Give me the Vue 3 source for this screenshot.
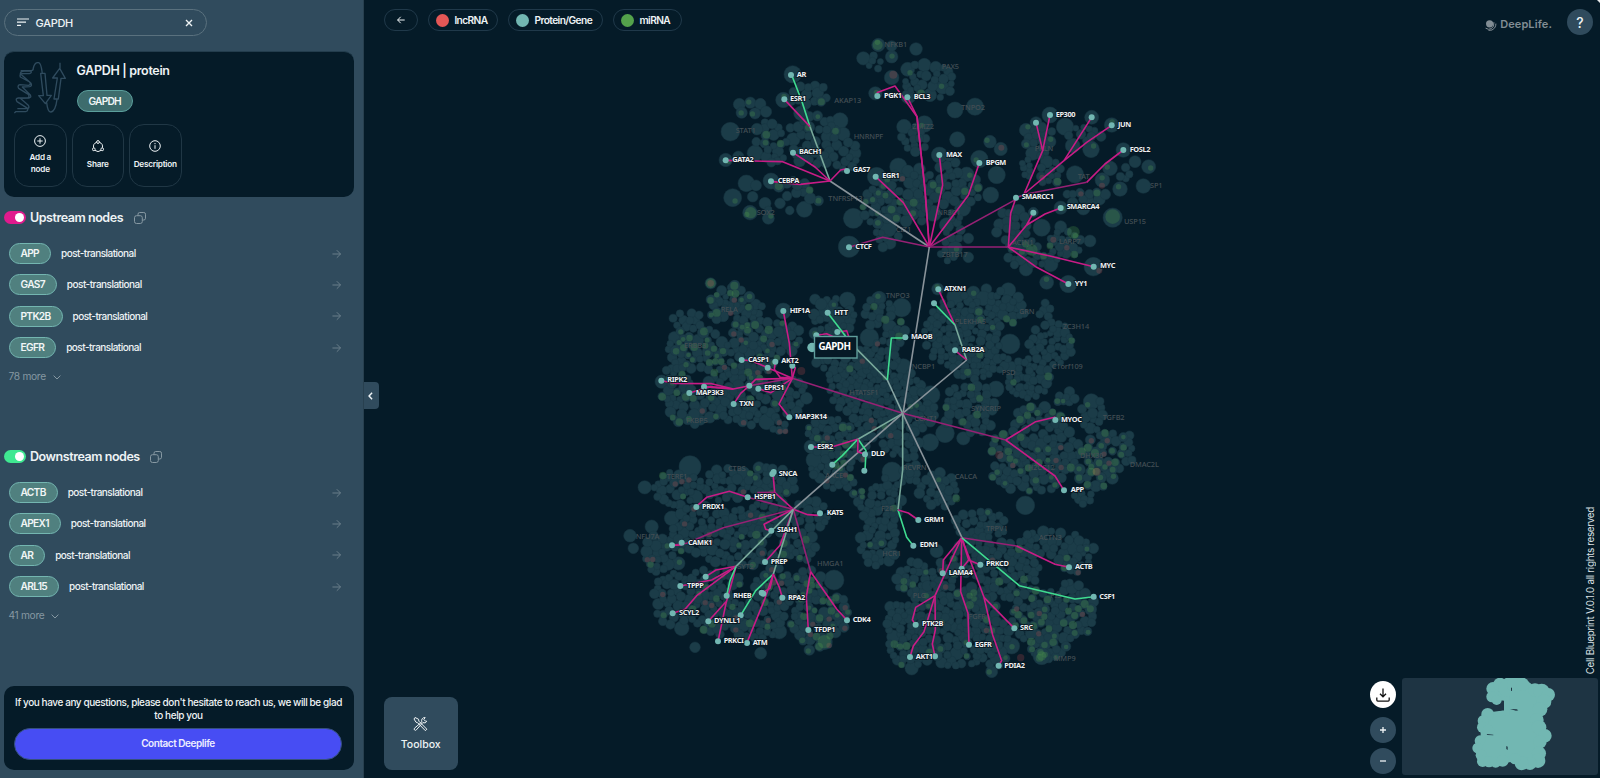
<script setup>
const upstream = ['APP', 'GAS7', 'PTK2B', 'EGFR']
const downstream = ['ACTB', 'APEX1', 'AR', 'ARL15']
const sections = [
  { title: 'Upstream nodes', tone: 'pink', rows: upstream, more: '78 more' },
  { title: 'Downstream nodes', tone: 'green', rows: downstream, more: '41 more' },
]
const legend = [
  { name: 'lncRNA', tone: 'red', width: 70 },
  { name: 'Protein/Gene', tone: 'teal', width: 95 },
  { name: 'miRNA', tone: 'leaf', width: 69 },
]

// Every graph tile has its own origin and is drawn at a third of its unit size.
const tiles = {
  a: [700, 30], b: [940, 30], c: [640, 270], d: [870, 270], e: [610, 430], f: [850, 440],
}
const px = (t, x) => tiles[t][0] + x / 3
const py = (t, y) => tiles[t][1] + y / 3

let seed = 4217
const rnd = () => {
  seed = (seed * 1664525 + 1013904223) % 4294967296
  return seed / 4294967296
}

// Standalone large nodes: x, y, r
const big = {
  a: [[91,305,28],[139,460,25],[98,503,27],[313,538,24],[150,548,22],[278,133,26],[250,210,23],[213,453,24],[490,85,20],[575,80,19],[648,57,19],[623,118,21],[673,105,20],[707,112,18],[727,172,20],[690,195,20],[420,272,24],[612,290,22],[673,282,25],[765,240,24],[460,565,30],[447,650,32],[565,597,24],[530,440,28],[595,410,26],[700,550,24],[526,190,20],[625,200,22],[718,375,24],[118,223,18],[151,218,17],[181,222,17],[165,250,17],[198,245,17],[125,248,17],[535,45,20],[575,48,16],[575,143,22],[303,250,22],[280,328,20],[165,370,24],[115,380,17],[158,500,16],[195,520,18],[205,565,18],[345,168,15],[770,330,20],[77,390,20],[430,312,20],[465,370,18],[240,520,16],[570,640,18]],
  b: [[52,328,23],[7,173,19],[25,125,14],[105,230,26],[118,387,26],[80,433,22],[170,435,26],[150,335,19],[182,357,20],[152,495,24],[68,535,24],[258,300,20],[330,255,24],[375,290,26],[288,278,18],[455,262,21],[515,285,22],[453,358,25],[398,347,22],[278,370,21],[320,395,19],[405,433,26],[487,450,22],[510,415,22],[550,360,22],[585,395,18],[626,410,21],[540,477,22],[610,468,22],[430,535,20],[478,508,18],[235,543,20],[305,593,26],[362,590,18],[450,633,18],[178,583,17],[460,710,28],[385,762,26],[320,757,21],[258,718,20],[362,533,20],[332,703,22],[20,585,22],[45,655,22],[85,625,16],[85,682,16],[330,335,18],[205,683,14],[280,547,15]],
  c: [[430,123,24],[622,90,24],[785,113,28],[718,84,20],[380,455,24],[688,203,28],[748,170,20],[65,335,20],[563,128,28],[525,190,18],[590,185,20],[155,130,14],[525,88,16],[600,150,20]],
  d: [[420,222,30],[378,357,24],[182,375,28],[225,490,28],[180,517,26],[280,505,20],[66,606,30],[466,706,28],[100,290,24],[310,68,20],[415,60,22],[349,57,16],[203,57,18],[727,625,18],[664,395,24],[524,412,18],[255,80,25],[25,85,20],[60,170,20],[340,85,22],[230,455,18]],
  e: [[240,110,33],[672,450,30],[104,172,20],[125,290,20],[60,317,19],[70,355,16],[452,670,18],[612,90,24],[258,200,20],[447,113,18],[400,130,20],[185,265,22],[598,660,16],[255,652,16],[205,400,20],[215,595,22],[602,50,20],[508,605,22],[320,120,16],[500,555,18],[400,585,20]],
  f: [[260,333,20],[485,618,24],[425,695,18],[185,685,20],[120,500,16],[130,590,20],[668,325,20],[580,275,18],[730,325,16],[730,485,16],[705,545,16],[225,465,24],[320,640,20],[415,620,20],[60,240,18],[60,190,16]],
}

// Packed communities: x, y, rx, ry, count, rMin, rMax, green share, red share
const groups = {
  a: [[200,330,46,60,26,10,18,.12,0],[325,195,60,36,20,11,18,.05,0],[345,330,88,75,56,11,19,.14,.01],[430,370,48,48,16,10,17,.05,0],[250,500,110,52,14,11,18,.25,0],[690,150,78,58,20,9,16,.1,.03],[515,100,32,26,5,9,14,.3,0],[645,325,45,40,12,10,16,.1,0],[640,490,108,85,56,11,19,.2,.02],[540,530,52,58,14,10,16,.3,0],[560,625,38,30,6,10,16,.1,0],[750,450,38,72,18,10,17,.1,.02],[205,375,50,25,8,10,15,.1,0]],
  b: [[20,460,28,72,18,10,17,.1,.02],[98,485,33,40,12,10,17,.1,0],[300,330,46,48,14,9,15,.08,0],[330,430,38,38,12,9,16,.1,.05],[435,315,52,28,9,9,15,.12,0],[262,410,18,33,7,9,14,0,0],[435,505,68,28,14,10,17,.15,.02],[555,435,16,23,5,9,13,0,0],[215,590,48,53,16,9,16,.15,.03],[375,640,48,43,18,9,16,.15,.03],[250,670,52,52,22,10,17,.35,.02],[325,695,28,23,6,9,15,.3,0],[25,665,26,33,5,9,14,.1,0],[40,590,33,48,8,9,15,.1,0]],
  c: [[275,85,43,46,17,9,16,.5,.05],[310,115,58,36,17,10,17,.45,.06],[240,110,33,43,12,9,16,.5,.03],[140,150,44,30,15,10,16,.12,0],[165,230,88,66,55,10,18,.55,.06],[340,180,63,42,32,10,17,.5,.04],[420,205,68,48,34,10,17,.2,.04],[300,270,112,58,68,10,17,.18,.1],[105,345,46,62,30,10,17,.2,.03],[160,410,86,56,46,10,18,.2,.08],[290,360,108,58,60,10,18,.1,.08],[440,375,66,56,42,10,18,.08,.05],[330,440,86,28,15,10,17,.05,.02],[420,470,22,20,6,9,15,.1,.2],[580,140,66,58,32,10,18,.08,.03],[700,130,28,43,12,10,16,.1,0],[640,340,76,92,110,9,16,.02,.02],[690,290,63,56,60,9,16,.05,.03],[730,370,48,68,44,9,16,.05,.03],[550,270,28,28,9,9,15,0,0],[570,490,68,52,38,10,17,.25,.06],[680,470,63,48,38,10,17,.12,.04],[720,400,72,52,26,10,16,.05,.02]],
  d: [[235,190,72,97,110,9,16,.03,0],[315,190,77,127,140,9,16,.03,0],[310,270,77,58,50,9,16,.02,0],[410,110,62,52,40,10,17,.1,0],[525,120,20,23,7,10,14,0,0],[545,220,70,64,74,9,16,.03,0],[475,325,64,60,74,9,16,.04,0],[400,280,23,23,7,9,15,0,0],[300,400,75,60,58,10,17,.08,0],[320,460,48,33,17,10,16,.05,0],[110,350,48,43,25,10,16,.03,.02],[130,430,70,48,34,10,17,.03,.02],[80,490,58,68,26,10,17,.05,.08],[35,260,48,53,32,10,16,.05,.1],[35,130,38,43,13,10,16,.15,0],[80,190,36,38,10,10,16,.3,0],[500,470,82,58,50,11,18,.25,0],[450,530,92,52,60,11,18,.4,.02],[560,540,68,68,52,11,18,.35,.03],[480,610,116,56,75,11,18,.4,.05],[590,385,30,24,10,10,16,.3,0],[665,430,33,58,23,10,17,.1,0],[700,550,68,68,54,11,18,.65,.03],[680,610,58,43,26,11,18,.5,.06],[770,540,22,48,10,10,16,.3,0],[640,685,30,20,10,10,15,.15,0],[205,660,60,52,44,10,17,.04,.03],[122,610,24,33,10,10,15,.03,0],[110,530,38,38,14,10,16,.05,.02]],
  e: [[210,175,78,52,34,10,17,.06,.06],[350,165,68,50,30,10,17,.04,.01],[480,160,76,53,38,10,17,.05,0],[150,370,50,58,28,10,18,.08,.02],[260,300,82,75,60,10,18,.08,.04],[390,300,86,66,64,10,17,.12,.06],[600,255,56,43,30,10,17,.05,0],[480,260,58,58,34,10,16,.04,0],[570,350,53,48,30,10,17,.2,.04],[400,385,106,28,24,10,17,.1,.02],[190,510,66,82,54,10,18,.15,.03],[310,540,68,78,52,10,17,.16,.03],[310,455,86,38,26,10,17,.1,.03],[440,570,84,58,50,10,17,.1,.04],[490,480,56,68,40,10,17,.12,.08],[590,470,53,53,30,10,17,.2,.08],[590,580,50,58,38,10,17,.5,.04],[670,550,46,58,34,10,17,.5,.04],[630,630,36,28,17,10,16,.7,.05],[680,140,56,40,22,10,17,.12,.05],[745,200,20,26,10,10,16,.7,0],[700,60,82,43,34,10,17,.2,.07],[620,110,18,46,4,9,14,0,0]],
  f: [[95,200,62,68,50,10,17,.05,0],[85,310,56,70,48,10,17,.05,0],[130,110,38,33,10,10,16,.05,0],[390,255,82,40,36,10,17,.15,0],[590,310,86,40,38,10,17,.04,.02],[675,340,53,58,27,10,17,.06,.05],[370,350,68,58,42,10,17,.1,.02],[480,390,92,86,92,10,17,.08,.02],[190,420,50,56,32,10,17,.12,.02],[280,410,38,43,15,10,16,.1,.03],[165,540,58,60,46,10,17,.12,.02],[260,530,73,73,60,10,17,.08,.02],[180,630,70,48,38,10,17,.14,.02],[370,520,78,78,58,10,17,.2,.02],[330,620,88,62,48,10,17,.14,.04],[430,610,58,73,38,10,17,.15,.05],[580,530,96,86,90,10,18,.45,.04],[670,520,60,78,46,10,18,.25,.02],[590,620,58,43,28,10,17,.6,.02],[660,460,38,38,15,10,16,.1,0]],
}

const cells = []
const marks = []
for (const [t, list] of Object.entries(big)) {
  for (const [x, y, r] of list) {
    const c = { x: px(t, x), y: py(t, y), r: r / 3 }
    cells.push(c)
    if (rnd() < 0.28) marks.push({ x: c.x + (rnd() - 0.5) * c.r, y: c.y + (rnd() - 0.5) * c.r, r: 2.7, k: 'leafy' })
  }
}
for (const [t, list] of Object.entries(groups)) {
  for (const [gx, gy, rx, ry, count, r0, r1, green, red] of list) {
    let made = 0
    for (let tries = 0; made < count && tries < count * 14; tries++) {
      const a = rnd() * Math.PI * 2
      const d = Math.sqrt(rnd())
      const x = px(t, gx + Math.cos(a) * d * rx)
      const y = py(t, gy + Math.sin(a) * d * ry)
      const r = (r0 + rnd() * (r1 - r0)) / 3
      if (cells.some(p => Math.hypot(p.x - x, p.y - y) < (p.r + r) * 0.68)) continue
      cells.push({ x, y, r })
      made++
      const roll = rnd()
      if (roll < green) marks.push({ x: x + rnd() * 2 - 1, y: y + rnd() * 2 - 1, r: 2.3 + rnd() * 1.8, k: 'leafy' })
      else if (roll < green + red) marks.push({ x: x + 1, y: y + 1, r: 2.7, k: 'ruddy' })
    }
  }
}
const extraCells = [['b', 518, 563, 29], ['e', 643, 635, 24], ['c', 212, 40, 17], ['c', 283, 47, 16], ['f', 575, 648, 26]]
for (const [t, x, y, r] of extraCells) cells.push({ x: px(t, x), y: py(t, y), r: r / 3 })
const extraMarks = [
  ['b', 518, 560, 22, 'leafy'], ['b', 400, 607, 19, 'leafy'], ['a', 152, 548, 17, 'leafy'],
  ['a', 533, 45, 15, 'leafy'], ['e', 643, 635, 20, 'leafy'], ['c', 212, 40, 15, 'leafy'], ['c', 212, 40, 10, 'ruddy'],
  ['c', 283, 47, 12, 'leafy'], ['a', 580, 134, 12, 'ruddy'], ['b', 184, 353, 9, 'ruddy'], ['b', 486, 467, 9, 'ruddy'],
  ['b', 340, 629, 9, 'ruddy'], ['f', 512, 653, 11, 'ruddy'], ['d', 388, 555, 12, 'ruddy'], ['d', 680, 605, 12, 'ruddy'],
  ['c', 484, 303, 12, 'ruddy'], ['b', 478, 722, 9, 'ruddy'], ['b', 275, 660, 18, 'leafy'], ['f', 575, 648, 14, 'leafy'],
]
for (const [t, x, y, r, k] of extraMarks) marks.push({ x: px(t, x), y: py(t, y), r: r / 3, k })

// Links: tile, tone, points
const links = [
  ['a', 'grey', '390,453 688,651'], ['a', 'mint', '330,290 390,453'], ['a', 'green', '275,135 305,212 330,290'],
  ['a', 'pink', '253,208 330,290'], ['a', 'pink', '279,368 345,411 390,453'], ['a', 'pink', '77,391 248,395 390,453'],
  ['a', 'pink', '213,454 300,463 390,453'], ['a', 'pink', '440,416 422,420 390,453'],
  ['a', 'pink', '530,188 585,168 651,260 675,480 688,651'], ['a', 'pink', '622,201 651,260 675,480 688,651'],
  ['a', 'pink', '527,440 610,518 688,651'], ['a', 'pink', '718,375 728,465 688,651'],
  ['a', 'rose', '447,652 548,622 688,651'],
  ['b', 'pink', '118,399 85,496 -32,651'], ['b', 'rose', '228,508 -32,651'], ['b', 'rose', '205,651 -32,651'],
  ['b', 'pink', '288,278 308,362 252,492'], ['b', 'pink', '330,255 308,362'], ['b', 'pink', '455,262 372,392 252,492'],
  ['b', 'pink', '515,286 440,337 372,392'], ['b', 'pink', '550,360 495,402 440,457'], ['b', 'rose', '440,457 260,492 228,503'],
  ['b', 'pink', '228,503 212,550 205,651'], ['b', 'pink', '280,548 260,585 205,651'], ['b', 'pink', '362,534 315,552 260,585'],
  ['b', 'pink', '461,710 330,678 205,651'], ['b', 'pink', '385,762 290,712 205,651'],
  ['b', 'grey', '-32,651 -111,1151'],
  ['c', 'pink', '430,123 448,220 457,325'], ['c', 'rose', '457,325 788,430'], ['c', 'pink', '305,270 335,272 383,293 457,325'],
  ['c', 'pink', '406,275 403,298 420,322 457,325'], ['c', 'pink', '457,287 466,293 457,325'],
  ['c', 'pink', '64,332 105,340 215,341 280,357'], ['c', 'pink', '148,369 210,350 280,357 328,347'],
  ['c', 'pink', '192,350 280,357'], ['c', 'rose', '328,347 457,325'], ['c', 'pink', '328,347 347,328 457,325'],
  ['c', 'pink', '281,402 302,370 328,347'], ['c', 'pink', '355,356 393,368 457,325'], ['c', 'pink', '448,442 417,402 457,325'],
  ['c', 'pink', '529,196 560,191 590,205'], ['c', 'pink', '592,186 620,182 628,205'], ['c', 'green', '563,128 618,200'],
  ['c', 'mint', '648,235 742,330'], ['c', 'pale', '742,330 788,430'], ['c', 'green', '795,204 754,204 742,330'],
  ['c', 'mint', '788,430 655,507'], ['c', 'grey', '788,430 460,718'],
  ['d', 'pink', '205,58 250,155 255,165'], ['d', 'green', '192,100 255,165'], ['d', 'mint', '255,165 290,270'],
  ['d', 'pink', '255,241 290,270'], ['d', 'grey', '290,270 98,430'], ['d', 'rose', '98,430 407,510'],
  ['d', 'pink', '556,441 497,455 407,510'], ['d', 'pink', '582,661 555,618 407,510'], ['d', 'mint', '98,430 98,600 84,718'],
  ['d', 'grey', '98,430 276,803'],
  ['e', 'pink', '603,51 665,51 744,27'], ['e', 'green', '667,104 697,77 744,27'], ['e', 'green', '744,27 768,62 765,122'],
  ['e', 'pink', '744,27 743,65 765,73'],
  ['e', 'pink', '489,130 494,187 550,238'], ['e', 'rose', '494,187 442,188'], ['e', 'rose', '413,202 550,238'],
  ['e', 'pink', '258,230 290,202 358,184 413,202'], ['e', 'pink', '630,250 625,256 593,254 550,238'],
  ['e', 'rose', '185,346 230,340 340,293 550,238'], ['e', 'pink', '185,346 215,345'], ['e', 'pink', '484,302 467,298 462,283 550,238'],
  ['e', 'pink', '465,396 510,346 550,238'], ['e', 'rose', '550,238 602,425'], ['e', 'pink', '602,425 589,500 595,600'],
  ['e', 'pink', '602,425 680,537 711,571'], ['e', 'mint', '550,238 490,432'], ['e', 'mint', '550,238 378,409'],
  ['e', 'pink', '287,440 318,420 378,409'], ['e', 'pink', '211,468 305,450 378,409'], ['e', 'pink', '188,550 225,538 260,497 378,409'],
  ['e', 'pink', '324,634 348,520 370,440 378,409'], ['e', 'green', '350,497 360,452 378,409'], ['e', 'pink', '295,574 348,515'],
  ['e', 'green', '392,556 437,482 490,432'], ['e', 'pink', '411,638 465,505 490,432'], ['e', 'pink', '455,489 480,475 490,432'],
  ['e', 'pink', '517,503 508,472 490,432'],
  ['f', 'green', '144,210 170,292 190,317'], ['f', 'pink', '144,210 175,219 205,240'],
  ['f', 'pink', '335,293 280,360 278,400'], ['f', 'pink', '335,293 297,375 255,467'], ['f', 'pink', '255,467 197,502 187,540 197,554'],
  ['f', 'pink', '255,467 222,575 190,618 180,651'], ['f', 'pink', '255,467 256,570 247,612 255,649'],
  ['f', 'pink', '335,293 332,455 354,520 357,614'], ['f', 'pink', '335,293 356,360 390,374'], ['f', 'pink', '356,360 335,386'],
  ['f', 'pink', '335,293 402,472 428,585 455,662 446,677'], ['f', 'pink', '402,472 493,565'],
  ['f', 'rose', '335,293 500,318'], ['f', 'pink', '500,318 615,373 657,382'], ['f', 'green', '335,293 508,437 675,477 731,470'],
].map(([t, tone, pts]) => ({
  tone,
  d: pts.split(' ').map(p => p.split(',').map(Number)).map(([x, y]) => `${px(t, x).toFixed(2)},${py(t, y).toFixed(2)}`).join(' '),
}))

// Highlighted nodes: tile, x, y, label, label x, label y
const nodes = [
  ['a',273,135,'AR',290,133],['a',253,208,'ESR1',270,206],['a',279,368,'BACH1',297,366],['a',77,391,'GATA2',97,389],
  ['a',213,454,'CEBPA',233,452],['a',441,423,'GAS7',458,420],['a',532,198,'PGK1',552,196],['a',622,202,'BCL3',641,201],
  ['a',527,440,'EGR1',547,438],['a',447,652,'CTCF',466,651],['a',718,375,'MAX',738,374],
  ['b',330,255,'EP300',347,253],['b',288,278],['b',455,262],['b',515,286,'JUN',534,284],['b',550,360,'FOSL2',569,358],
  ['b',118,399,'BPGM',137,398],['b',228,503,'SMARCC1',245,501],['b',362,534,'SMARCA4',380,530],['b',280,548],
  ['b',461,710,'MYC',480,708],['b',385,762,'YY1',404,760],
  ['c',430,123,'HIF1A',449,122],['c',563,128,'HTT',583,127],['c',592,186],['c',529,196],['c',305,270,'CASP1',324,268],
  ['c',406,275,'AKT2',424,273],['c',383,293],['c',457,287],['c',64,332,'RIPK2',82,330],['c',148,369,'MAP3K3',167,367],
  ['c',192,350],['c',328,347],['c',355,356,'EPRS1',372,354],['c',281,402,'TXN',298,401],['c',448,442,'MAP3K14',465,440],
  ['d',205,58,'ATXN1',222,56],['d',192,100],['d',106,202,'MAOB',123,200],['d',255,241,'RAB2A',275,239],
  ['d',556,450,'MYOC',573,448],['d',582,661,'APP',602,660],
  ['e',603,51,'ESR2',621,49],['e',667,104],['e',765,73,'DLD',783,71],['e',763,122],['e',491,126],['e',487,132,'SNCA',506,130],
  ['e',413,202,'HSPB1',432,201],['e',259,231,'PRDX1',276,230],['e',630,250,'KAT5',650,248],['e',215,338,'CAMK1',234,337],
  ['e',186,346],['e',484,302,'SIAH1',501,300],['e',465,396,'PREP',482,394],['e',287,440],['e',211,468,'TPPP',231,467],
  ['e',350,497,'RHEB',370,496],['e',188,550,'SCYL2',207,548],['e',295,574,'DYNLL1',312,572],['e',324,634,'PRKCI',341,632],
  ['e',411,639,'ATM',428,637],['e',392,556],['e',455,488],['e',460,491],['e',517,503,'RPA2',534,502],['e',595,600,'TFDP1',613,598],
  ['e',711,571,'CDK4',728,570],
  ['f',205,240,'GRM1',222,239],['f',190,317,'EDN1',209,315],['f',391,374,'PRKCD',408,372],['f',335,386],
  ['f',278,400,'LAMA4',296,398],['f',657,382,'ACTB',675,380],['f',731,470,'CSF1',748,469],['f',197,554,'PTK2B',216,552],
  ['f',493,565,'SRC',510,563],['f',357,614,'EGFR',374,613],['f',180,651,'AKT1',197,650],['f',255,649],['f',446,677,'PDIA2',463,676],
].map(([t, x, y, label, lx, ly]) => ({ x: px(t, x), y: py(t, y), label, lx: px(t, lx || 0), ly: py(t, ly || 0) + 2.4 }))

const faint = [
  ['a','NFKB1',553,44],['a','PAX5',725,110],['a','AKAP13',403,212],['a','STAT1',107,303],['a','HNRNPF',461,321],['a','ZMIZ2',637,290],
  ['a','TNFRSF13',385,505],['a','SOX2',170,549],['a','CIZ1',587,600],['a','NR3C1',712,548],
  ['b','TNPO2',63,232],['b','PKLN',284,357],['b','TAT',413,440],['b','SP1',630,467],['b','USP15',552,575],['b','ACIN1',216,637],
  ['b','LARP7',357,635],['b','ZBTB17',5,674],
  ['c','TNPO3',737,77],['c','RELA',242,120],['c','ERBB3',132,226],['c','HTATSF1',628,367],['c','FKBP5',138,451],
  ['d','PLEKHA5',254,155],['d','GRN',447,124],['d','ZC3H14',578,171],['d','C1orf109',545,290],['d','NCBP1',125,291],['d','PSD',395,307],
  ['d','SYNCRIP',303,416],['d','CCNT1',133,447],['d','TGFB2',698,442],['d','DHX30',630,557],['d','H2CC12',473,592],['d','DMAC2L',779,583],
  ['d','RCVRN',98,592],['d','CALCA',254,620],['d','F2R',33,715],
  ['e','TERF1',170,141],['e','CTBS',354,115],['e','NFU7A',77,320],['e','SYT2',382,410],['e','HMGA1',621,402],['e','AACE',645,137],
  ['f','TRPV1',408,265],['f','ACTN3',566,293],['f','HCR1',97,341],['f','PLG',188,468],['f','FGFR1',355,530],['f','MMP9',611,657],['f','PI3',600,467],
].map(([t, label, x, y]) => ({ label, x: px(t, x), y: py(t, y) + 2.4 }))

// Bumps along the outline of the overview silhouette
const bumps = [
  [459,596,20],[480,583,20],[456,620,17],[470,630,15],[500,595,25],[525,585,23],[547,583,20],[585,600,20],[605,605,24],[625,614,20],
  [612,635,22],[600,658,22],[590,690,21],[597,712,22],[615,737,20],[600,755,20],[597,790,21],[594,812,22],[570,820,20],[545,820,21],
  [525,806,17],[443,673,19],[430,692,17],[428,712,17],[445,722,18],[420,752,16],[413,774,16],[424,796,17],[428,814,17],[447,815,17],
  [467,816,17],[488,812,18],
]
</script>

<template>
  <div class="app">
    <aside class="side">
      <div class="search">
        <svg class="ic-filter" viewBox="0 0 12 9"><path d="M0 1h12M0 4.2h9M0 7.4h4" /></svg>
        <span>GAPDH</span>
        <svg class="ic-x" viewBox="0 0 8 8"><path d="M1 1l6 6M7 1L1 7" /></svg>
      </div>

      <section class="card">
        <div class="head">
          <svg class="fold" viewBox="0 0 156 156">
            <path d="M1 153l4-4h30q8-2 6-10L9 119q-6-10 4-11h27q8-3 3-11L14 79q-5-9 4-11l26 2q8-3 3-10L19 45q-3-9 5-10h22q8-2 5-8H31q-11 0-12 8l32 29q4 8-4 10l-22 1 24 24q4 8-4 9l-26 1 23 20q6 7-1 11H10" />
            <path d="M20 26h32q6 0 6-8C61 5 68 1 74 2c8 2 9 20 11 33M80 34h13l6 66h13l-18 25-20-24h14zM98 122c2 18 6 29 13 28 10-2 16-22 18-38M120 111l10-63h-14l21-29 17 30h-13l-8 62zM138 20V2" />
          </svg>
          <div class="names">
            <h1>GAPDH | protein</h1>
            <span class="chip deep">GAPDH</span>
          </div>
        </div>
        <div class="actions">
          <div class="act">
            <svg viewBox="0 0 12 12"><circle cx="6" cy="6" r="5.4" /><path d="M6 3.3v5.4M3.3 6h5.4" /></svg>
            <span>Add a<br>node</span>
          </div>
          <div class="act">
            <svg viewBox="0 0 12 12"><circle cx="6" cy="2" r="1.4" /><circle cx="1.8" cy="9.3" r="1.4" /><circle cx="10.2" cy="9.3" r="1.4" /><path d="M4.6 2.3A4.8 4.8 0 0 0 1.6 7.8M7.4 2.3a4.8 4.8 0 0 1 3 5.5M3 10.4a4.8 4.8 0 0 0 6 0" /></svg>
            <span>Share</span>
          </div>
          <div class="act">
            <svg viewBox="0 0 12 12"><circle cx="6" cy="6" r="5.3" /><path d="M6 5.2v3.6M6 3v1.2" /></svg>
            <span>Description</span>
          </div>
        </div>
      </section>

      <section v-for="s in sections" :key="s.title" class="group">
        <header>
          <i class="toggle" :class="s.tone"></i>
          <h2>{{ s.title }}</h2>
          <svg class="copy" viewBox="0 0 12 12"><rect x=".5" y="3.7" width="7.8" height="7.8" rx="2" /><path d="M4 3.6V2.2Q4 .5 5.7.5h4.1q1.7 0 1.7 1.7v4.1Q11.5 8 9.8 8H8.4" /></svg>
        </header>
        <div v-for="r in s.rows" :key="r" class="row">
          <span class="chip">{{ r }}</span>
          <span class="kind">post-translational</span>
          <svg class="go" viewBox="0 0 10 10"><path d="M.5 5h9M5.3.8L9.5 5 5.3 9.2" /></svg>
        </div>
        <div class="more">{{ s.more }}<svg viewBox="0 0 8 5"><path d="M.6.6L4 4 7.4.6" /></svg></div>
      </section>

      <section class="contact">
        <p>If you have any questions, please don't hesitate to reach us, we will be glad to help you</p>
        <button>Contact Deeplife</button>
      </section>
    </aside>

    <main class="stage">
      <svg class="graph" viewBox="364 0 1236 778">
        <circle v-for="(c, i) in cells" :key="'c' + i" :cx="c.x" :cy="c.y" :r="c.r" class="node" />
        <circle v-for="(c, i) in marks" :key="'m' + i" :cx="c.x" :cy="c.y" :r="c.r" :class="c.k" />
        <text v-for="f in faint" :key="f.label" :x="f.x" :y="f.y" class="faint">{{ f.label }}</text>
        <polyline v-for="(l, i) in links" :key="'l' + i" :points="l.d" class="link" :class="l.tone" />
        <circle v-for="(n, i) in nodes" :key="'n' + i" :cx="n.x" :cy="n.y" r="3" class="hit" />
        <template v-for="(n, i) in nodes" :key="'t' + i">
          <text v-if="n.label" :x="n.lx" :y="n.ly" class="label">{{ n.label }}</text>
        </template>
        <circle cx="812" cy="347.5" r="4.7" class="hit" />
        <rect x="814.5" y="336.5" width="42.5" height="21.5" class="focus" />
        <text x="818.5" y="349.8" class="focus-label">GAPDH</text>
      </svg>

      <div class="tab"><svg viewBox="0 0 6 10"><path d="M5 1L1.2 5 5 9" /></svg></div>
      <div class="corner"></div>

      <div class="topbar">
        <span class="pill back"><svg viewBox="0 0 8 8"><path d="M7.7 4H.6M3.7.8L.6 4l3.1 3.2" /></svg></span>
        <span v-for="l in legend" :key="l.name" class="pill" :style="{ width: l.width + 'px' }">
          <i :class="l.tone"></i><b>{{ l.name }}</b>
        </span>
        <div class="brand">
          <svg viewBox="0 0 12 12"><circle cx="4.6" cy="4.8" r="3.6" /><path d="M.6 9.2q2.900 2 5.800.4Q9.400 7.800 8.900 3.200M3.500 11.400q4 .4 6-2.300 1.600-2.300 1.400-4.500" /></svg>
          DeepLife.
        </div>
        <span class="help">?</span>
      </div>

      <div class="bottom">
        <div class="toolbox">
          <svg viewBox="0 0 16 16"><path d="M2 1.5l3.5 1.7.4 2L13.8 13.2 12.4 14.7 4.7 6.800 3 6.200 1 3zM13.800 5.300a3 3 0 0 1-4 1.300L3.300 13.900a1.200 1.200 0 0 1-1.800-1.700L8.900 5.800A3 3 0 0 1 12.200 1.600L10.800 3.400l1.600 1.700z" /></svg>
          Toolbox
        </div>
        <div class="zoom">
          <span class="round light"><svg viewBox="0 0 14 14"><path d="M7 .5v8M4 5.800l3 3 3-3M.8 9.500v2.600q0 1 1 1h10.400q1 0 1-1V9.500" /></svg></span>
          <span class="round"><svg viewBox="0 0 6 6"><path d="M3 0v6M0 3h6" /></svg></span>
          <span class="round"><svg viewBox="0 0 6 6"><path d="M0 3h6" /></svg></span>
        </div>
        <div class="right">
          <span class="rights">Cell Blueprint V.0.1.0 all rights reserved</span>
          <div class="map">
            <svg viewBox="186 564 588 291">
              <path class="mass" d="M459 596L480 585 500 572H547L585 600 625 614 600 658 590 690 610 737 600 760 594 812 545 820 525 806 488 812 447 815 413 774 430 740 430 692 443 676 500 668V625L456 620z" />
              <circle v-for="(b, i) in bumps" :key="i" :cx="b[0]" :cy="b[1]" :r="b[2]" />
              <path class="gap" d="M458 655q12-12 33-13v15q-18 12-33-2zM510 657l20 1 5 3-7 1zM499 768l4 2v10l-4-3zM440 732l20 2v2l-18-1zM513 592l3 3v8l-3-1z" />
            </svg>
          </div>
        </div>
      </div>
    </main>
  </div>
</template>

<style>
html, body { margin: 0; background: #051b28; overflow: hidden; }
</style>

<style scoped>
.app { display: flex; width: 1600px; height: 778px; background: #051b28; color: #eef3f5; font-family: Inter, "Liberation Sans", sans-serif; overflow: hidden; }
.app * { box-sizing: border-box; }
svg { fill: none; stroke: currentColor; display: block; }
.side { width: 364px; flex: none; background: #304b5d; padding: 9px 10px 8px 3.5px; display: flex; flex-direction: column; border-right: 1px solid #28404f; }
.search { width: 203px; height: 27px; border: 1px solid #5a717e; border-radius: 14px; display: flex; align-items: center; padding: 0 13px 0 12.5px; font-size: 11px; font-weight: 500; letter-spacing: -.3px; }
.search span { flex: 1; margin-left: 6.5px; }
.ic-filter { width: 12px; height: 9px; stroke-width: 1.2; margin-top: -1px; }
.ic-x { width: 8px; height: 8px; stroke-width: 1.4; }
.card { margin-top: 15px; width: 350px; height: 146px; background: #051b28; border-radius: 10px; padding: 11px 10.5px; border-top: 1px solid #233d4d; }
.head { display: flex; gap: 10.5px; height: 61px; }
.fold { width: 52px; height: 52px; margin-top: -1px; color: #2f4b5e; stroke-width: 4; stroke-linejoin: round; }
h1 { margin: 0; font-size: 12.5px; line-height: 16px; font-weight: 600; letter-spacing: -.32px; }
.names .chip { margin-top: 11px; }
.chip { display: inline-flex; align-items: center; height: 21px; padding: 0 11px 1px; border: 1px solid #74b6b1; border-radius: 11px; background: #50807f; font-size: 10.2px; font-weight: 600; letter-spacing: -.7px; color: #f1f6f6; }
.chip.deep { background: #3d6c6d; height: 22px; border-color: #5b9f9c; letter-spacing: -.8px; }
.actions { display: flex; gap: 5px; }
.act { width: 52.5px; height: 63px; border: 1px solid #203745; border-radius: 15px; display: flex; flex-direction: column; align-items: center; justify-content: center; text-align: center; font-size: 8.2px; line-height: 12px; font-weight: 600; letter-spacing: -.22px; gap: 6px; padding-bottom: 1px; }
.act:first-child { gap: 4px; padding-bottom: 2px; }
.act svg { width: 12px; height: 12px; }
.group { height: 239px; flex: none; padding-top: 12px; }
header { display: flex; align-items: center; height: 17px; }
h2 { margin: 0 0 0 4.5px; font-size: 12.5px; font-weight: 600; letter-spacing: -.45px; }
.toggle { width: 22px; height: 13px; border-radius: 7px; display: flex; justify-content: flex-end; padding: 2px; }
.toggle::after { content: ""; width: 9px; height: 9px; border-radius: 50%; background: #fff; }
.toggle.pink { background: #e01a8d; }
.toggle.green { background: #3fe891; }
.copy { width: 12px; height: 12px; margin-left: 10.5px; color: #8799a3; }
.row { display: flex; align-items: center; height: 31.3px; padding: 0 12px 0 5px; }
header + .row { margin-top: 12px; }
.kind { flex: 1; margin-left: 10px; font-size: 10px; font-weight: 500; letter-spacing: -.52px; margin-top: -1px; }
.go { width: 9px; height: 10px; color: #71848f; }
.more { display: flex; align-items: center; gap: 7px; color: #8698a2; font-size: 10.2px; letter-spacing: -.3px; margin: 7px 0 0 5px; }
.more svg { width: 8px; height: 5px; margin-top: 2px; }
.contact { margin-top: auto; height: 84px; width: 350px; background: #051b28; border-radius: 10px; padding: 10px 10.5px; text-align: center; }
.contact p { margin: 0 -6px; font-size: 10px; line-height: 13px; font-weight: 500; letter-spacing: -.42px; padding: 0 4px; }
.contact button { width: 328px; height: 32px; margin-top: 6px; border: 1px solid #35507b; border-radius: 16px; background: #474df3; color: #eef; font: 600 10px Inter, sans-serif; letter-spacing: -.45px; display: block; padding: 0 0 2px; }
.stage { position: relative; flex: 1; display: flex; flex-direction: column; justify-content: space-between; }
.graph { position: absolute; inset: 0; width: 1236px; height: 778px; stroke: none; }
.node { fill: #1b3c48; stroke: #183642; stroke-width: .5; }
.leafy { fill: #54a24b; fill-opacity: .25; }
.ruddy { fill: #e45756; fill-opacity: .2; }
.hit { fill: #72b7b2; }
.link { fill: none; stroke-width: 1.6; stroke-linejoin: round; }
.pink { stroke: #c81c86; }
.rose { stroke: #962174; }
.grey { stroke: #89939a; }
.pale { stroke: #87a5a3; }
.mint { stroke: #79a99b; }
.green { stroke: #3fdc90; }
.label, .faint { font-family: "Noto Sans", sans-serif; font-size: 7.4px; font-weight: 700; letter-spacing: -.38px; }
.label { fill: #edf0f1; stroke: #07151f; stroke-width: 1.6px; paint-order: stroke; }
.faint { fill: #434e54; font-weight: 500; letter-spacing: -.1px; }
.focus { fill: #061a26; stroke: #5f9d9b; stroke-width: 1.4; }
.focus-label { font: 700 9.8px "Noto Sans", sans-serif; letter-spacing: -.55px; fill: #fff; }
.tab { position: absolute; left: 0; top: 382px; width: 15px; height: 27px; background: #304b5d; border-radius: 0 4px 4px 0; display: grid; place-items: center; padding-right: 3px; }
.tab svg { width: 5px; height: 8px; stroke-width: 1.8; }
.corner { position: absolute; right: 0; top: 0; border-top: 3px solid #e8eaeb; border-left: 3px solid transparent; }
.topbar { position: relative; display: flex; gap: 10px; padding: 9px 7px 0 20px; align-items: flex-start; }
.pill { height: 22px; border: 1px solid #20394a; border-radius: 11px; display: flex; align-items: center; padding-left: 7px; font-size: 10.2px; letter-spacing: -.6px; white-space: nowrap; }
.pill b { font-weight: 600; padding-bottom: 1px; }
.pill i { width: 13px; height: 13px; border-radius: 50%; margin-right: 5.5px; }
.pill i.red { background: #e45756; }
.pill i.teal { background: #72b7b2; }
.pill i.leaf { background: #54a24b; }
.back { width: 34px; padding: 0; justify-content: center; }
.back svg { width: 8px; height: 8px; }
.brand { margin-left: auto; margin-top: 8px; margin-right: 5px; display: flex; align-items: center; gap: 3px; color: #828d94; font-size: 11px; line-height: 15px; font-weight: 600; letter-spacing: .1px; }
.brand svg { width: 12px; height: 12px; }
.brand circle { fill: currentColor; stroke: none; }
.help { width: 26px; height: 26px; border-radius: 50%; background: #304b5d; display: grid; place-items: center; font-size: 14px; font-weight: 500; }
.bottom { position: relative; display: flex; align-items: flex-end; padding: 0 2px 3px 20px; }
.toolbox { width: 73.5px; height: 73px; margin-bottom: 5px; border-radius: 8px; background: #304b5d; display: flex; flex-direction: column; align-items: center; justify-content: center; gap: 6px; padding-bottom: 1px; font-size: 10.5px; font-weight: 500; }
.toolbox svg { width: 16px; height: 16px; }
.zoom { margin-left: auto; display: flex; flex-direction: column; margin-right: 6px; gap: 5px; padding-bottom: 1px; }
.round { width: 26px; height: 26px; border-radius: 50%; background: #304b5d; display: grid; place-items: center; }
.round svg { width: 6px; height: 6px; stroke-width: 1.3; }
.round.light { height: 27px; background: #fff; color: #111; margin-bottom: 4px; }
.round.light svg { width: 14px; height: 14px; }
.right { display: flex; flex-direction: column; align-items: flex-end; gap: 4px; }
.rights { writing-mode: vertical-rl; transform: rotate(180deg); font-size: 9.8px; line-height: 12px; letter-spacing: -.29px; color: #dce2e5; white-space: nowrap; margin-right: 1px; }
.map { width: 196px; height: 97px; background: #1e3443; border-radius: 3px; overflow: hidden; }
.map svg { width: 196px; height: 97px; fill: #72b7b2; stroke: none; }
.map .mass { stroke: #72b7b2; stroke-width: 16; }
.map .gap { fill: #1e3443; }
</style>
